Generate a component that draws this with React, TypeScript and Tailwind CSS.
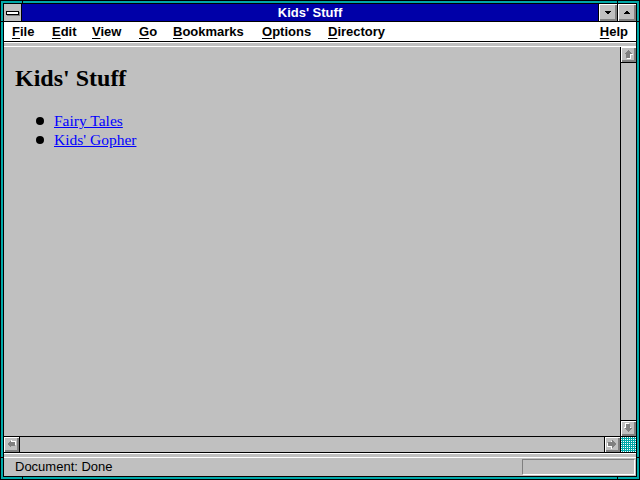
import React from "react";

const bevel =
  "bg-[#c0c0c0] shadow-[inset_1px_1px_0_#ffffff,inset_-1px_-1px_0_#808080,inset_-2px_-2px_0_#808080]";

/** Disabled Win 3.1 scroll arrow: grey arrow with a white etch */
function ScrollArrow({ dir }: { dir: "up" | "down" | "left" | "right" }) {
  const rot = { up: 0, right: 90, down: 180, left: 270 }[dir];
  const pts = "7,3 11,7 9,7 9,11 5,11 5,7 3,7";
  return (
    <div className={`w-[15px] h-[15px] ${bevel}`}>
      <svg width="15" height="15" viewBox="0 0 15 15" shapeRendering="crispEdges">
        <g transform={`rotate(${rot} 7 7)`}>
          <polygon points={pts} fill="#ffffff" transform="translate(1 1)" />
          <polygon points={pts} fill="#808080" />
        </g>
      </svg>
    </div>
  );
}

function MenuItem({ label, width }: { label: string; width?: string }) {
  return (
    <span className={width ?? ""}>
      <span className="underline underline-offset-2">{label[0]}</span>
      {label.slice(1)}
    </span>
  );
}

export default function App() {
  return (
    <div className="relative w-[640px] h-[480px] bg-[#00a8a8] border border-black p-[2px] font-['Liberation_Sans',Arial,sans-serif] text-black">
      <div className="w-full h-full border border-black flex flex-col bg-[#c0c0c0]">
        {/* title bar */}
        <div className="h-[18px] border-b border-black flex shrink-0">
          <div className="w-[18px] shrink-0 border-r border-black bg-[#c0c0c0] flex items-center justify-center">
            <div className="w-[13px] h-[4px] bg-white border border-black shadow-[1px_1px_0_#808080]" />
          </div>
          <div className="flex-1 bg-[#0000a8] border-r border-black text-white font-bold text-[13px] leading-none flex items-center justify-center">
            Kids' Stuff
          </div>
          <div className={`w-[19px] shrink-0 border-r border-black ${bevel}`}>
            <svg width="18" height="17" viewBox="0 0 18 17" shapeRendering="crispEdges">
              <polygon points="5,7 12,7 8.5,10.5" fill="#000" />
            </svg>
          </div>
          <div className={`w-[18px] shrink-0 ${bevel}`}>
            <svg width="18" height="17" viewBox="0 0 18 17" shapeRendering="crispEdges">
              <polygon points="5,10 12,10 8.5,6.5" fill="#000" />
            </svg>
          </div>
        </div>

        {/* menu bar */}
        <div className="h-[20px] shrink-0 bg-white border-b border-black flex items-center pl-[8px] pr-[8px] text-[13px] font-bold">
          <MenuItem label="File" width="w-[40px]" />
          <MenuItem label="Edit" width="w-[40px]" />
          <MenuItem label="View" width="w-[47px]" />
          <MenuItem label="Go" width="w-[34px]" />
          <MenuItem label="Bookmarks" width="w-[89px]" />
          <MenuItem label="Options" width="w-[66px]" />
          <MenuItem label="Directory" />
          <span className="ml-auto">
            <MenuItem label="Help" />
          </span>
        </div>

        <div className="h-[5px] shrink-0 border-t border-white border-b border-black bg-[#c0c0c0]" />

        {/* document + vertical scrollbar */}
        <div className="flex-1 min-h-0 flex">
          <div className="flex-1 pl-[11px] pt-[17px] font-['Liberation_Serif','Times_New_Roman',serif]">
            <h1 className="text-[24px] leading-[28px] font-bold">Kids' Stuff</h1>
            <ul className="mt-[19px] text-[15.5px] leading-[19px]">
              {["Fairy Tales", "Kids' Gopher"].map((t) => (
                <li key={t} className="flex items-center">
                  <span className="ml-[21px] w-[8px] h-[8px] rounded-full bg-black" />
                  <a href="#" className="ml-[10px] text-[#0000ff] underline">
                    {t}
                  </a>
                </li>
              ))}
            </ul>
          </div>
          <div className="w-[16px] border-l border-black flex flex-col">
            <div className="border-b border-black">
              <ScrollArrow dir="up" />
            </div>
            <div className="flex-1 bg-[#c0c0c0]" />
            <div className="border-t border-black">
              <ScrollArrow dir="down" />
            </div>
          </div>
        </div>

        {/* horizontal scrollbar */}
        <div className="h-[17px] shrink-0 border-t border-b border-black flex">
          <div className="border-r border-black">
            <ScrollArrow dir="left" />
          </div>
          <div className="flex-1 bg-[#c0c0c0]" />
          <div className="border-l border-black">
            <ScrollArrow dir="right" />
          </div>
          <div className="border-l border-black w-[16px]">
            <svg width="15" height="15" shapeRendering="crispEdges">
              <defs>
                <pattern id="dots" width="2" height="2" patternUnits="userSpaceOnUse">
                  <rect width="2" height="2" fill="#00a8a8" />
                  <rect width="1" height="1" fill="#ffffff" />
                </pattern>
              </defs>
              <rect width="15" height="15" fill="url(#dots)" />
            </svg>
          </div>
        </div>

        <div className="h-[5px] shrink-0 border-t border-white border-b border-black bg-[#c0c0c0]" />

        {/* status bar */}
        <div className="h-[18px] shrink-0 flex items-start pl-[11px] text-[13px]">
          <span className="leading-[17px]">Document: Done</span>
          <div className="ml-auto mr-[1px] mt-[1px] w-[113px] h-[16px] border-t border-l border-[#808080] border-b border-r border-b-white border-r-white" />
        </div>
      </div>

      {/* frame corner notches */}
      <div className="absolute left-[21px] top-0 w-px h-[3px] bg-black" />
      <div className="absolute left-[616px] top-0 w-px h-[3px] bg-black" />
      <div className="absolute left-[21px] bottom-0 w-px h-[3px] bg-black" />
      <div className="absolute left-[616px] bottom-0 w-px h-[3px] bg-black" />
      <div className="absolute left-0 top-[20px] w-[3px] h-px bg-black" />
      <div className="absolute right-0 top-[20px] w-[3px] h-px bg-black" />
      <div className="absolute left-0 top-[456px] w-[3px] h-px bg-black" />
      <div className="absolute right-0 top-[456px] w-[3px] h-px bg-black" />
    </div>
  );
}
